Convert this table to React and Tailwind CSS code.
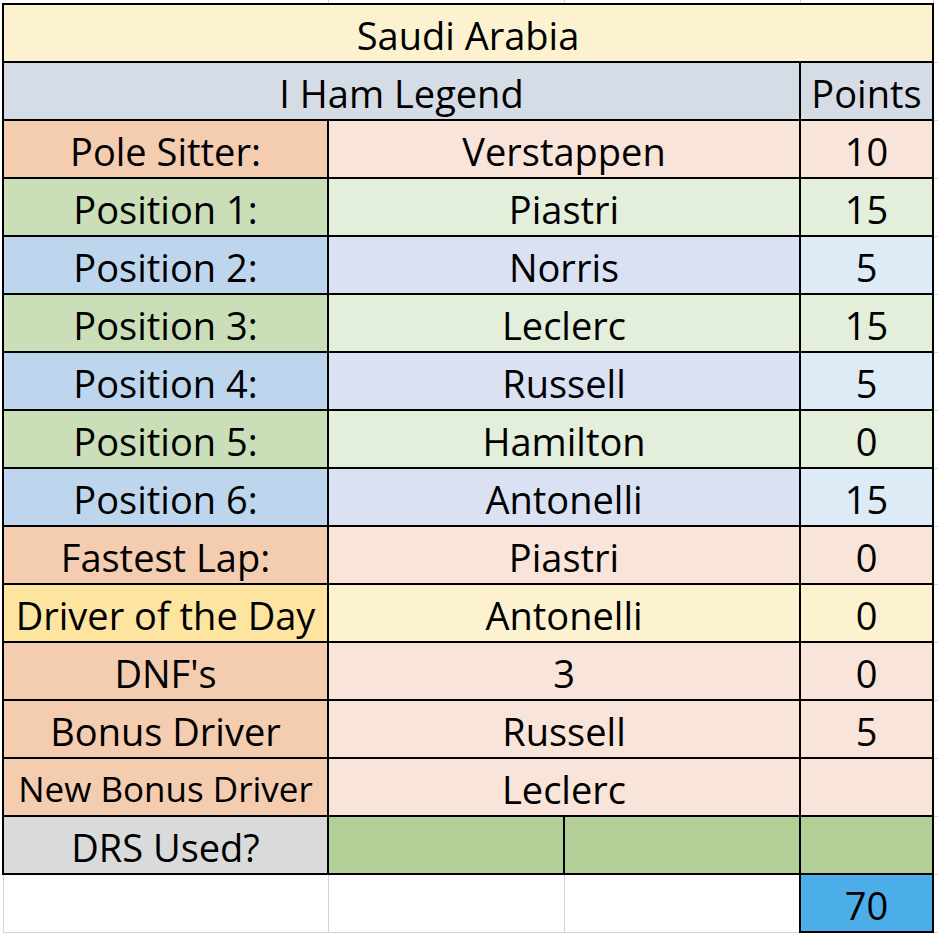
import React from 'react';

const tones = {
  orange: { label: 'bg-[#f4ccaf]', value: 'bg-[#f9e4da]', points: 'bg-[#f9e4da]' },
  green: { label: 'bg-[#cadfb8]', value: 'bg-[#e3eedb]', points: 'bg-[#e3eedb]' },
  blue: { label: 'bg-[#bed6ed]', value: 'bg-[#d9e1f2]', points: 'bg-[#ddebf7]' },
  gold: { label: 'bg-[#fde59f]', value: 'bg-[#fdf2cf]', points: 'bg-[#fdf2cf]' },
};

const picks = [
  { label: 'Pole Sitter:', value: 'Verstappen', points: '10', tone: 'orange' },
  { label: 'Position 1:', value: 'Piastri', points: '15', tone: 'green' },
  { label: 'Position 2:', value: 'Norris', points: '5', tone: 'blue' },
  { label: 'Position 3:', value: 'Leclerc', points: '15', tone: 'green' },
  { label: 'Position 4:', value: 'Russell', points: '5', tone: 'blue' },
  { label: 'Position 5:', value: 'Hamilton', points: '0', tone: 'green' },
  { label: 'Position 6:', value: 'Antonelli', points: '15', tone: 'blue' },
  { label: 'Fastest Lap:', value: 'Piastri', points: '0', tone: 'orange' },
  { label: 'Driver of the Day', value: 'Antonelli', points: '0', tone: 'gold' },
  { label: "DNF's", value: '3', points: '0', tone: 'orange' },
  { label: 'Bonus Driver', value: 'Russell', points: '5', tone: 'orange' },
  { label: 'New Bonus Driver', value: 'Leclerc', points: '', tone: 'orange', small: true },
];

// excel-ish cell: thick black border, centred text nudged toward the bottom
const cell = 'border-2 border-black p-0 pt-[4px] text-center align-middle whitespace-nowrap';
const grid = 'border border-[#d4d4d4] p-0';

export default function App() {
  return (
    <div
      className="w-[938px] h-[936px] overflow-hidden bg-white text-black text-[38px] leading-[52px]"
      style={{ fontFamily: '"Open Sans", "Liberation Sans", sans-serif' }}
    >
      <table className="table-fixed border-collapse ml-[2px] w-[944px]">
        <colgroup>
          <col className="w-[325px]" />
          <col className="w-[236px]" />
          <col className="w-[236px]" />
          <col className="w-[133px]" />
          <col className="w-[14px]" />
        </colgroup>
        <tbody>
          <tr className="h-[4px]">
            <td className="border-r border-[#d4d4d4] p-0" />
            <td className="border-r border-[#d4d4d4] p-0" />
            <td className="border-r border-[#d4d4d4] p-0" />
            <td className="border-r border-[#d4d4d4] p-0" />
            <td className="p-0" />
          </tr>
          <tr className="h-[58px]">
            <td colSpan={4} className={`${cell} bg-[#fcf2cf]`}>Saudi Arabia</td>
            <td className="border-b border-[#d4d4d4] p-0" />
          </tr>
          <tr className="h-[58px]">
            <td colSpan={3} className={`${cell} bg-[#d6dce5]`}>I Ham Legend</td>
            <td className={`${cell} bg-[#d6dce5]`}>Points</td>
            <td className="border-b border-[#d4d4d4] p-0" />
          </tr>
          {picks.map((p) => {
            const t = tones[p.tone];
            return (
              <tr key={p.label} className="h-[58px]">
                <td className={`${cell} ${t.label} ${p.small ? 'text-[35px]' : ''}`}>{p.label}</td>
                <td colSpan={2} className={`${cell} ${t.value}`}>{p.value}</td>
                <td className={`${cell} ${t.points}`}>{p.points}</td>
                <td className="border-b border-[#d4d4d4] p-0" />
              </tr>
            );
          })}
          <tr className="h-[58px]">
            <td className={`${cell} bg-[#dadada]`}>DRS Used?</td>
            <td className={`${cell} bg-[#b1cf96]`} />
            <td className={`${cell} bg-[#b1cf96]`} />
            <td className={`${cell} bg-[#b1cf96]`} />
            <td className="border-b border-[#d4d4d4] p-0" />
          </tr>
          <tr className="h-[58px]">
            <td className={grid} />
            <td className={grid} />
            <td className={grid} />
            <td className={`${cell} bg-[#4baee8]`}>70</td>
            <td className="border-b border-[#d4d4d4] p-0" />
          </tr>
        </tbody>
      </table>
    </div>
  );
}
